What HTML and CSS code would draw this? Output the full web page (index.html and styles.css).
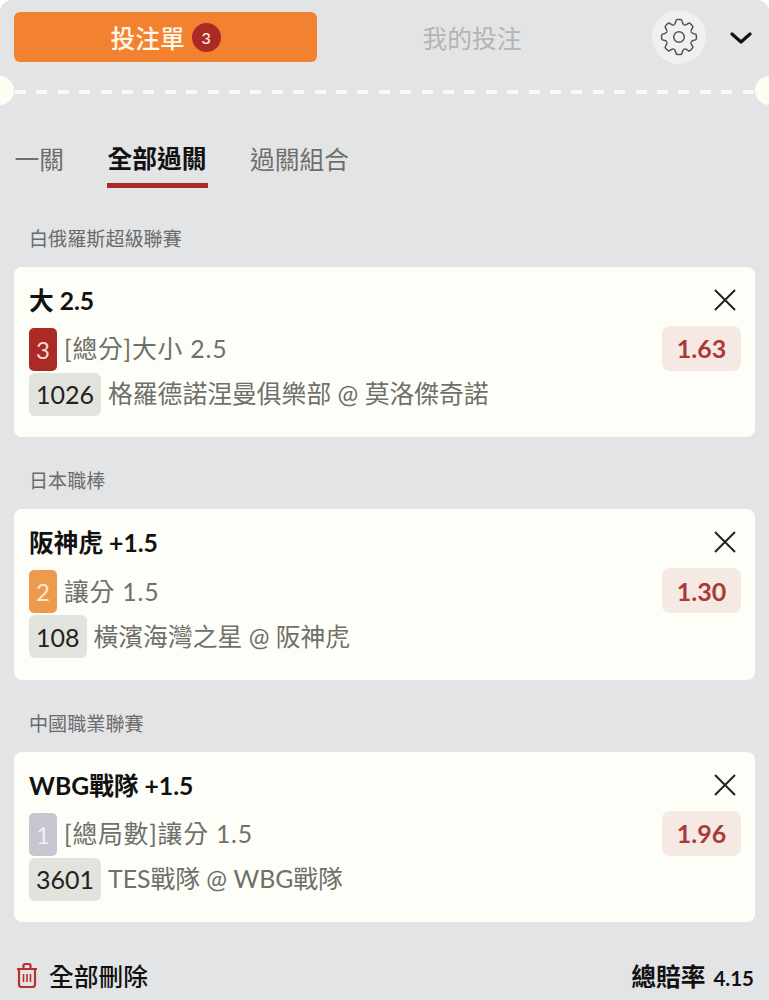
FILE: index.html
```html
<!DOCTYPE html>
<html lang="zh-Hant">
<head>
    <meta charset="UTF-8">
    <title>投注單</title>
    <link rel="stylesheet" href="styles.css">
</head>
<body>
    <div class="panel">
        <div class="top-bar">
            <div class="tab-main">投注單<span class="count">3</span></div>
            <div class="tab-other">我的投注</div>
            <div class="gear">
                <svg width="40" height="40" viewBox="-20 -20 40 40" fill="none" stroke="#555" stroke-width="1.5">
                    <defs>
                        <path id="tooth" d="M-5-12.2C-3.4-12.8-3.5-14.6-3.1-16Q-2.8-17.4-1.6-17.4H1.6Q2.8-17.4 3.1-16C3.5-14.6 3.4-12.8 5-12.2"/>
                    </defs>
                    <use href="#tooth"/>
                    <use href="#tooth" transform="rotate(45)"/>
                    <use href="#tooth" transform="rotate(90)"/>
                    <use href="#tooth" transform="rotate(135)"/>
                    <use href="#tooth" transform="rotate(180)"/>
                    <use href="#tooth" transform="rotate(225)"/>
                    <use href="#tooth" transform="rotate(270)"/>
                    <use href="#tooth" transform="rotate(315)"/>
                    <circle r="5.3"/>
                </svg>
            </div>
            <svg class="chevron" width="22" height="14" viewBox="0 0 22 14" fill="none" stroke="#111" stroke-width="3.2" stroke-linecap="round" stroke-linejoin="round">
                <path d="M2 3l9 8 9-8"/>
            </svg>
        </div>

        <div class="divider"></div>

        <div class="tabs">
            <div class="tab">一關</div>
            <div class="tab active">全部過關</div>
            <div class="tab">過關組合</div>
        </div>

        <div class="league">白俄羅斯超級聯賽</div>
        <div class="card">
            <div class="card-main">
                <div class="pick">大 2.5</div>
                <div class="row">
                    <span class="rank rank-3">3</span>
                    <span class="desc">[總分]大小 2.5</span>
                </div>
                <div class="row">
                    <span class="code">1026</span>
                    <span class="desc">格羅德諾涅曼俱樂部 @ 莫洛傑奇諾</span>
                </div>
            </div>
            <div class="card-side">
                <svg class="close" width="24" height="24" viewBox="0 0 24 24" stroke="#222" stroke-width="2"><path d="M2 2l20 20M22 2L2 22"/></svg>
                <div class="odds">1.63</div>
            </div>
        </div>

        <div class="league">日本職棒</div>
        <div class="card">
            <div class="card-main">
                <div class="pick">阪神虎 +1.5</div>
                <div class="row">
                    <span class="rank rank-2">2</span>
                    <span class="desc">讓分 1.5</span>
                </div>
                <div class="row">
                    <span class="code">108</span>
                    <span class="desc">橫濱海灣之星 @ 阪神虎</span>
                </div>
            </div>
            <div class="card-side">
                <svg class="close" width="24" height="24" viewBox="0 0 24 24" stroke="#222" stroke-width="2"><path d="M2 2l20 20M22 2L2 22"/></svg>
                <div class="odds">1.30</div>
            </div>
        </div>

        <div class="league">中國職業聯賽</div>
        <div class="card">
            <div class="card-main">
                <div class="pick">WBG戰隊 +1.5</div>
                <div class="row">
                    <span class="rank rank-1">1</span>
                    <span class="desc">[總局數]讓分 1.5</span>
                </div>
                <div class="row">
                    <span class="code">3601</span>
                    <span class="desc">TES戰隊 @ WBG戰隊</span>
                </div>
            </div>
            <div class="card-side">
                <svg class="close" width="24" height="24" viewBox="0 0 24 24" stroke="#222" stroke-width="2"><path d="M2 2l20 20M22 2L2 22"/></svg>
                <div class="odds">1.96</div>
            </div>
        </div>

        <div class="footer">
            <div class="delete-all">
                <svg width="22" height="26" viewBox="0 0 22 26" fill="none" stroke="#b5322e" stroke-width="2.2" stroke-linejoin="round">
                    <path d="M1 7h20M7.5 7V3.500q0-1.500 1.500-1.500h4q1.500 0 1.500 1.500V7M3 7v15.500Q3 25 5.500 25h11q2.500 0 2.500-2.500V7"/>
                    <path d="M7.500 12v8M11 12v8M14.500 12v8" stroke-width="1.600"/>
                </svg>
                全部刪除
            </div>
            <div class="total">總賠率<span class="total-value">4.15</span></div>
        </div>
    </div>
</body>
</html>
```

FILE: styles.css
```css
:root {
    --bg-panel: #e3e4e6;
    --bg-card: #fefef8;
    --orange: #f2822f;
    --red: #ab2a26;
    --text-grey: #6f6f6b;
}

* {
    margin: 0;
    padding: 0;
    box-sizing: border-box;
}

body {
    background-color: #ffffff;
    font-family: 'Lato', 'Noto Sans CJK TC', sans-serif;
    color: #111;
}

.panel {
    position: relative;
    height: 1000px;
    overflow: hidden;
    padding: 12px 14px 0;
    background-color: var(--bg-panel);
    border-radius: 12px 12px 0 0;
}

.top-bar {
    display: flex;
    align-items: center;
    height: 50px;
}

.tab-main {
    display: flex;
    align-items: center;
    justify-content: center;
    width: 303px;
    height: 50px;
    background-color: var(--orange);
    border-radius: 6px;
    color: #fff7e8;
    font-size: 24.750px;
    font-weight: 500;
}

.count {
    display: flex;
    align-items: center;
    justify-content: center;
    width: 29px;
    height: 29px;
    margin-left: 7px;
    background-color: var(--red);
    border-radius: 50%;
    font-size: 16px;
    font-weight: 500;
}

.tab-other {
    width: 310px;
    text-align: center;
    color: #b4b4b4;
    font-size: 24.750px;
}

.gear {
    display: flex;
    align-items: center;
    justify-content: center;
    width: 54px;
    height: 54px;
    margin-left: 25px;
    background-color: #f0f0f2;
    border-radius: 50%;
    flex-shrink: 0;
}

.chevron {
    flex-shrink: 0;
    margin: 2px 0 0 24px;
}

.divider {
    position: relative;
    height: 4px;
    margin: 28px -14px 0;
    background-image: repeating-linear-gradient(to right, #fafaf5 0, #fafaf5 11px, transparent 11px, transparent 21.400px);
    background-position: 15px 0;
}

.divider::before,
.divider::after {
    content: "";
    position: absolute;
    top: -14px;
    width: 29px;
    height: 29px;
    background-color: #fefdf3;
    border-radius: 50%;
}

.divider::before {
    left: -15px;
}

.divider::after {
    right: -15px;
}

.tabs {
    display: flex;
    gap: 43.500px;
    margin: 39px 0 0 0.500px;
}

.tab {
    height: 55px;
    padding-top: 9px;
    color: var(--text-grey);
    font-size: 24.750px;
    line-height: 36px;
}

.tab.active {
    margin: 0 -1px;
    padding: 8px 1px 0;
    color: #111;
    font-weight: 700;
    border-bottom: 5px solid var(--red);
}

.league {
    height: 24px;
    margin: 38.500px 0 16px 15px;
    color: #6b6b6b;
    font-size: 19.100px;
    line-height: 24px;
}

.card ~ .league {
    margin-top: 32px;
}

.card {
    display: flex;
    justify-content: space-between;
    height: 170.500px;
    padding: 16px 14px 0 15px;
    background-color: var(--bg-card);
    border-radius: 8px;
}

.pick {
    height: 36px;
    margin-bottom: 9px;
    font-size: 24.700px;
    font-weight: 700;
    line-height: 36px;
}

.row {
    display: flex;
    align-items: center;
    height: 43px;
    margin-bottom: 2px;
}

.rank {
    display: flex;
    align-items: center;
    justify-content: center;
    width: 28px;
    height: 43px;
    margin-right: 7px;
    border-radius: 5px;
    color: #ffffff;
    font-size: 24px;
}

.rank-3 {
    background-color: var(--red);
    color: #f8d9cf;
}

.rank-2 {
    background-color: #ee9a4c;
    color: #fde8d0;
}

.rank-1 {
    background-color: #c6c6d0;
    color: #eeeef2;
}

.code {
    display: flex;
    align-items: center;
    justify-content: center;
    height: 43px;
    padding: 0 7px;
    margin-right: 7px;
    background-color: #e3e3de;
    border-radius: 6px;
    color: #222;
    font-size: 25px;
}

.desc {
    color: var(--text-grey);
    font-size: 24.800px;
    line-height: 40px;
    white-space: nowrap;
}

.rank + .desc {
    letter-spacing: 0.800px;
}

.card-side {
    display: flex;
    flex-direction: column;
    align-items: flex-end;
}

.close {
    margin: 5px 4px 0 0;
}

.odds {
    display: flex;
    align-items: center;
    justify-content: center;
    width: 79px;
    height: 45px;
    margin-top: 14px;
    background-color: #f6e9e4;
    border-radius: 8px;
    color: #a93a38;
    font-size: 25px;
    font-weight: 700;
}

.footer {
    display: flex;
    align-items: center;
    justify-content: space-between;
    height: 50px;
    margin-top: 28px;
}

.delete-all {
    display: flex;
    align-items: center;
    gap: 11px;
    padding-left: 2px;
    font-size: 24.750px;
    font-weight: 500;
}

.total {
    margin-right: 1px;
    font-size: 24.750px;
    font-weight: 700;
}

.total-value {
    margin-left: 8px;
    font-size: 20.500px;
}
```
